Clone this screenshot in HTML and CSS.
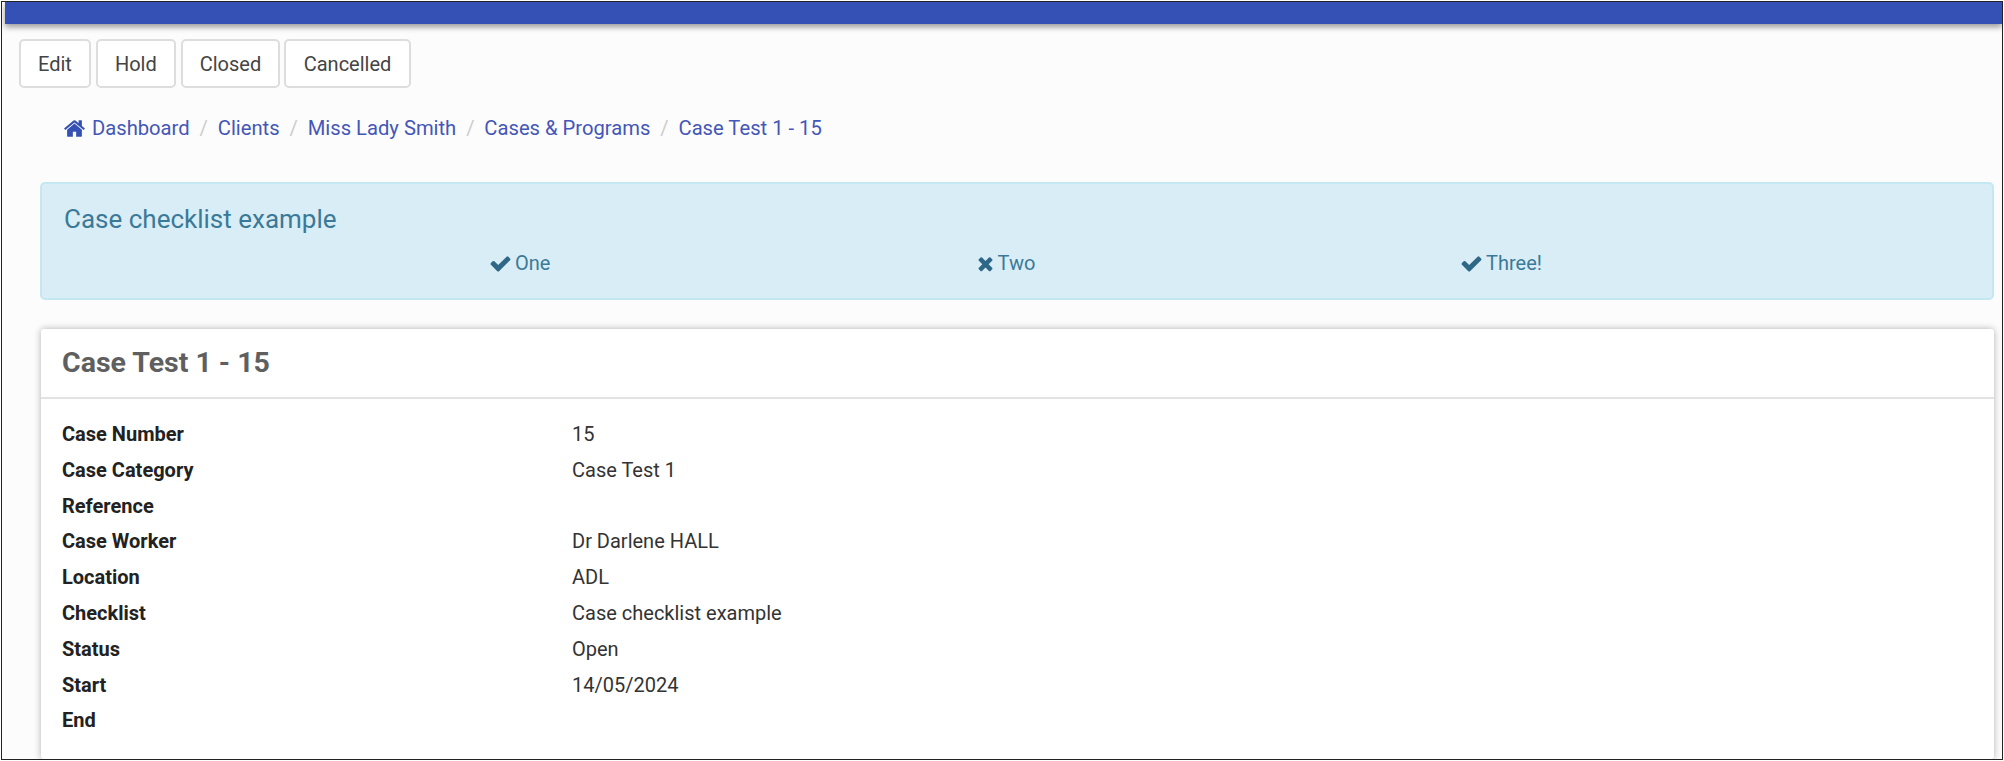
FILE: index.html
```html
<!DOCTYPE html>
<html lang="en">
<head>
<meta charset="utf-8">
<title>Case Test 1 - 15</title>
<link rel="stylesheet" href="styles.css">
</head>
<body>
<div class="frame">
  <header class="topbar"></header>
  <div class="actions">
    <button class="btn">Edit</button>
    <button class="btn">Hold</button>
    <button class="btn">Closed</button>
    <button class="btn btn-wide">Cancelled</button>
  </div>
  <nav class="crumbs">
    <a class="crumb"><svg class="home" viewBox="0 0 1792 1792"><path d="M1472 992v480q0 26-19 45t-45 19h-384v-384h-256v384h-384q-26 0-45-19t-19-45v-480q0-1 .5-3t.5-3l575-474 575 474q1 2 1 6zm223-69l-62 74q-8 9-21 11h-3q-13 0-21-7l-692-577-692 577q-12 8-24 7-13-2-21-11l-62-74q-8-10-7-23.5t11-21.5l719-599q32-26 76-26t76 26l244 204v-195q0-14 9-23t23-9h192q14 0 23 9t9 23v408l219 182q10 8 11 21.5t-7 23.5z"/></svg>Dashboard</a>
    <span class="sep">/</span><a class="crumb">Clients</a>
    <span class="sep">/</span><a class="crumb">Miss Lady Smith</a>
    <span class="sep">/</span><a class="crumb">Cases &amp; Programs</a>
    <span class="sep">/</span><a class="crumb">Case Test 1 - 15</a>
  </nav>
  <section class="alert">
    <h4 class="alert-title">Case checklist example</h4>
    <div class="checks">
      <div class="check"><svg class="tick" viewBox="0 0 1792 1792"><path d="M1671 566q0 40-28 68l-724 724-136 136q-28 28-68 28t-68-28l-136-136-362-362q-28-28-28-68t28-68l136-136q28-28 68-28t68 28l294 295 656-657q28-28 68-28t68 28l136 136q28 28 28 68z"/></svg>One</div>
      <div class="check"><svg class="cross" viewBox="0 0 1792 1792"><path d="M1490 1322q0 40-28 68l-136 136q-28 28-68 28t-68-28l-294-294-294 294q-28 28-68 28t-68-28l-136-136q-28-28-28-68t28-68l294-294-294-294q-28-28-28-68t28-68l136-136q28-28 68-28t68 28l294 294 294-294q28-28 68-28t68 28l136 136q28 28 28 68t-28 68l-294 294 294 294q28 28 28 68z"/></svg>Two</div>
      <div class="check"><svg class="tick" viewBox="0 0 1792 1792"><path d="M1671 566q0 40-28 68l-724 724-136 136q-28 28-68 28t-68-28l-136-136-362-362q-28-28-28-68t28-68l136-136q28-28 68-28t68 28l294 295 656-657q28-28 68-28t68 28l136 136q28 28 28 68z"/></svg>Three!</div>
    </div>
  </section>
  <section class="card">
    <h3 class="card-title">Case Test 1 - 15</h3>
    <dl class="details">
      <dt>Case Number</dt><dd>15</dd>
      <dt>Case Category</dt><dd>Case Test 1</dd>
      <dt>Reference</dt><dd></dd>
      <dt>Case Worker</dt><dd>Dr Darlene HALL</dd>
      <dt>Location</dt><dd>ADL</dd>
      <dt>Checklist</dt><dd>Case checklist example</dd>
      <dt>Status</dt><dd>Open</dd>
      <dt>Start</dt><dd>14/05/2024</dd>
      <dt>End</dt><dd></dd>
    </dl>
  </section>
</div>
</body>
</html>
```
FILE: styles.css
```css
* { box-sizing: border-box; }
html, body { margin: 0; padding: 0; background: #fff; }
body { padding: 1px; height: 761px; overflow: hidden; font-family: Roboto, "Liberation Sans", sans-serif; }
.frame { height: 759px; border: 1px solid #222; background: #fcfcfc; overflow: hidden; display: flex; flex-direction: column; }
.topbar { height: 22px; margin-left: 3px; background: #3551b5; box-shadow: 0 3px 6px rgba(0,0,0,.4); flex: none; }
.actions { display: flex; gap: 5px; margin: 15px 0 0 17px; flex: none; }
.btn { height: 49px; padding: 0 17px; border: 2px solid #ddd; border-radius: 5px; background: #fff; color: #444; font: 400 20px Roboto, sans-serif; }
.btn-wide { margin-left: -1px; padding: 0 18px 0 17.5px; }
.crumbs { display: flex; align-items: center; margin: 26px 0 0 61px; height: 28px; font-size: 20.2px; flex: none; }
.crumb { color: #4456b8; display: flex; align-items: center; }
.sep { color: #ccc; margin: 0 9.9px; }
.home { width: 23px; height: 23px; fill: #3551b5; margin-right: 6px; }
.alert { margin: 40px 8px 0 38px; height: 118px; border: 2px solid #c4e8f1; border-radius: 5px; background: #d9edf7; color: #3a7a98; padding: 20px 22px 0; flex: none; }
.alert-title { margin: 0; font-weight: 400; font-size: 26px; line-height: 30px; }
.checks { display: grid; grid-template-columns: repeat(3, 485.5px); margin: 16px 0 0 425px; font-size: 20px; line-height: 26px; }
.check { display: flex; align-items: center; }
.tick { width: 23px; height: 23px; fill: #2f6787; margin-right: 3px; }
.cross { width: 21px; height: 21px; fill: #2f6787; margin-right: 2px; }
.card { margin: 29px 8px 0 39px; flex: 1; background: #fff; border-radius: 3px; box-shadow: 0 0 7px rgba(0,0,0,.3); }
.card-title { margin: 0; height: 70px; padding-left: 21px; border-bottom: 2px solid #e3e3e3; font-size: 28.5px; font-weight: 700; color: #5f5f5f; line-height: 68px; }
.details { display: grid; grid-template-columns: 510px 1fr; grid-auto-rows: 35.8px; margin: 18px 0 0 21px; font-size: 20px; line-height: 35.8px; color: #333; }
.details dt { font-weight: 700; color: #222; }
.details dd { margin: 0; }
```
